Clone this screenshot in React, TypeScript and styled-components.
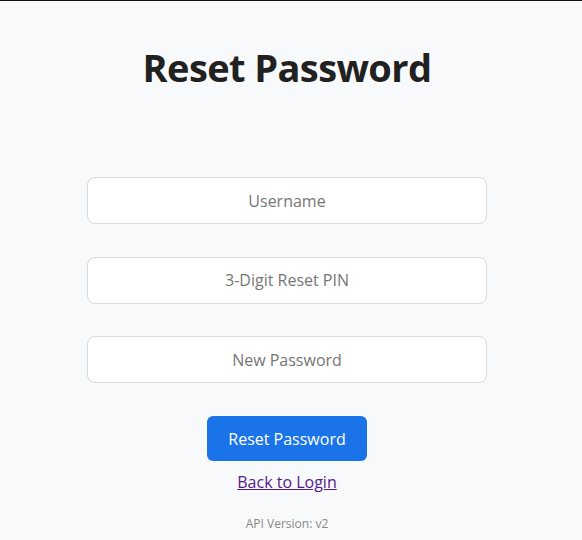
import { FC } from "react";
import styled, { createGlobalStyle } from "styled-components";

const Global = createGlobalStyle`
   html, body {
      margin: 0;
      padding: 0;
      background: #f8f9fa;
   }
   body {
      font-family: "Open Sans", "Noto Sans", sans-serif;
      border-top: 1px solid #111;
   }
`

const Page = styled.div`
   display: flex;
   flex-direction: column;
   align-items: center;
   padding: 42px 8px 0 0;
   min-height: 539px;
   box-sizing: border-box;
`

const Title = styled.h1`
   margin: 0 0 86px;
   font-size: 38px;
   line-height: 48px;
   font-weight: 700;
   color: #212121;
   letter-spacing: -0.6px;
`

const Form = styled.form`
   display: flex;
   flex-direction: column;
   align-items: center;
   gap: 33px;
   width: 400px;
`

const Input = styled.input`
   width: 100%;
   height: 47px;
   box-sizing: border-box;
   border: 1px solid #d9dadc;
   border-radius: 8px;
   background: #fff;
   font-family: inherit;
   font-size: 16px;
   text-align: center;
   color: #333;
   outline: none;
   &::placeholder {
      color: #767676;
   }
   & + & {
      margin-top: -0.5px;
   }
`

const Button = styled.button`
   width: 160px;
   height: 45px;
   border: none;
   border-radius: 6px;
   background: #1a73e8;
   color: #fff;
   font-family: inherit;
   font-size: 16px;
   cursor: pointer;
`

const BackLink = styled.a`
   margin-top: 10px;
   font-size: 16px;
   line-height: 22px;
   color: #551a8b;
   text-decoration: underline;
`

const Version = styled.div`
   margin-top: 23px;
   font-size: 12px;
   line-height: 16px;
   color: #888;
`

const App: FC = () => {
   return (
      <>
         <Global />
         <Page>
            <Title>Reset Password</Title>
            <Form onSubmit={(e) => e.preventDefault()}>
               <Input placeholder="Username" />
               <Input placeholder="3-Digit Reset PIN" />
               <Input placeholder="New Password" type="password" />
               <Button type="submit">Reset Password</Button>
            </Form>
            <BackLink href="#">Back to Login</BackLink>
            <Version>API Version: v2</Version>
         </Page>
      </>
   )
}

export default App
